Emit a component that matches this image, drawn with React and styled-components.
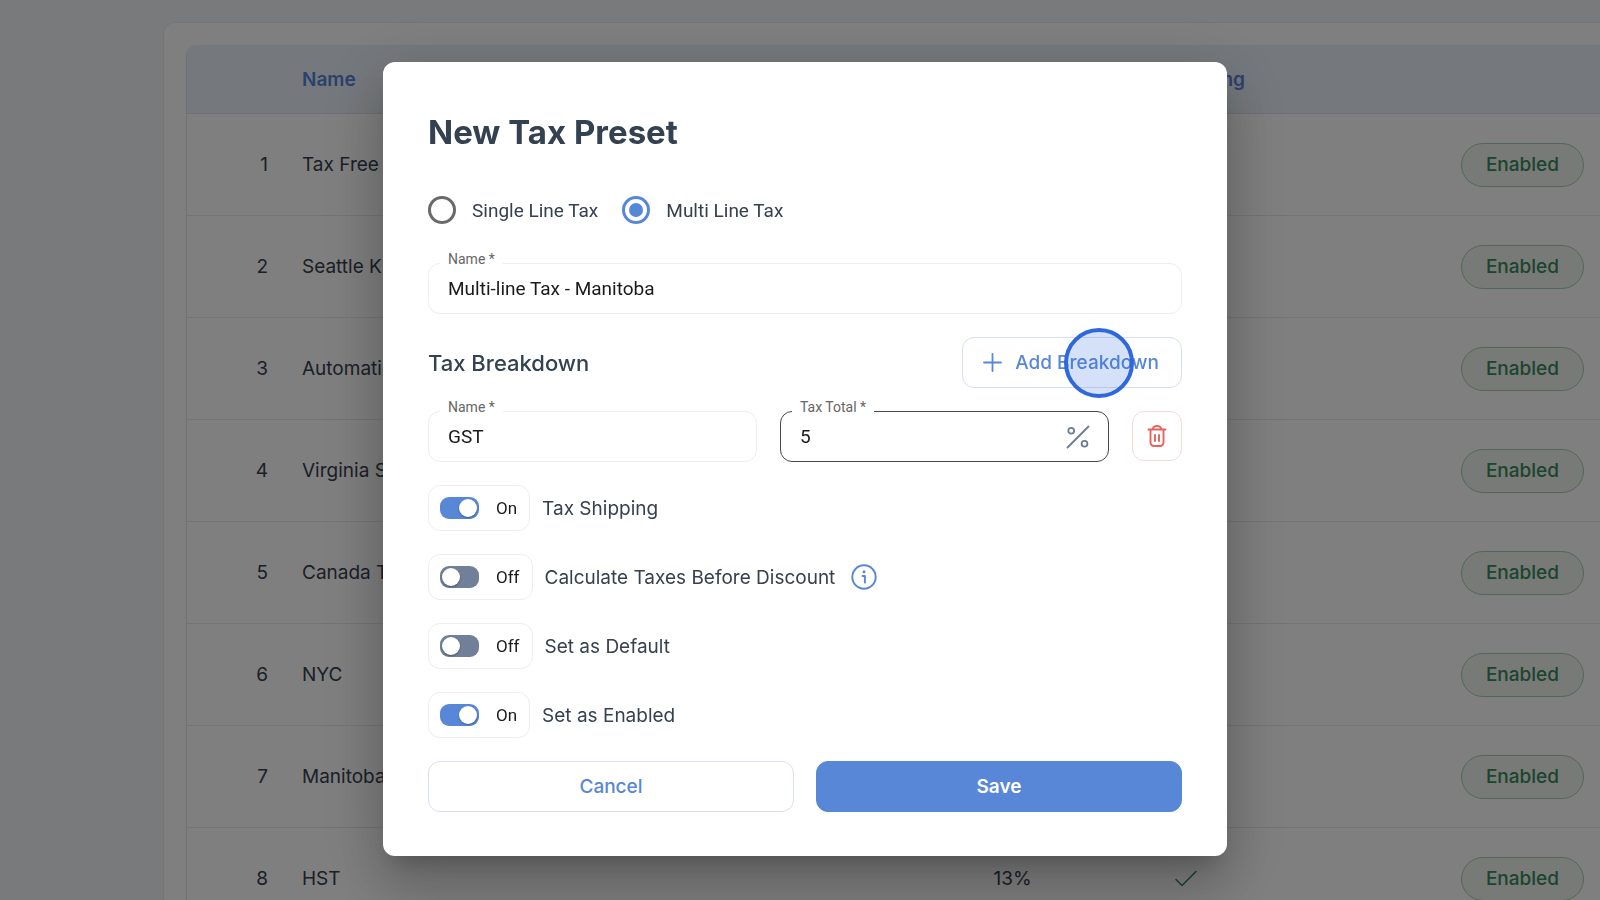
import React, { useState } from 'react';
import styled, { createGlobalStyle, ThemeProvider } from 'styled-components';

const theme = {
  primary: '#5887d8',
  ink: '#37404f',
  heading: '#344150',
  line: '#eceef3',
  inter: 'Inter, "Liberation Sans", sans-serif',
  roboto: 'Roboto, "Liberation Sans", sans-serif',
};

const GlobalStyle = createGlobalStyle`
  *, *::before, *::after { box-sizing: border-box; }
  body {
    margin: 0;
    background: #f3f5f8;
    font-family: ${theme.inter};
    font-size: 19px;
    color: ${theme.ink};
  }
`;

/* ---------- preset list behind the dialog ---------- */

const Page = styled.main`
  height: 100vh;
  overflow: hidden;
  padding: 22px 0 0 163px;
`;

const Card = styled.section`
  background: #fff;
  border: 1px solid #e9ebef;
  border-right: 0;
  border-radius: 12px 0 0 0;
  padding: 22px 0 22px 22px;
`;

const TableFrame = styled.div`
  border: 1px solid #e0e3e9;
  border-right: 0;
  border-top: 0;
  border-radius: 10px 0 0 0;
  overflow: hidden;
`;

const Table = styled.table`
  width: 100%;
  table-layout: fixed;
  border-collapse: separate;
  border-spacing: 0;
`;

const HeadCell = styled.th`
  height: 69px;
  padding: 0 16px;
  background: #ebf1f9;
  border-bottom: 1px solid #dbe0e9;
  color: #5583dc;
  font-weight: 600;
  text-align: ${(p) => p.$align || 'left'};
  width: ${(p) => p.$width || 'auto'};
  white-space: nowrap;
`;

const Cell = styled.td`
  height: 102px;
  padding: 0 16px;
  border-bottom: 1px solid #e7e9ed;
  text-align: ${(p) => p.$align || 'left'};
  white-space: nowrap;
  overflow: hidden;

  svg { display: block; margin: 0 auto; }
`;

const NumberCell = styled(Cell)`
  padding-right: 18px;
  text-align: right;
`;

const StatusPill = styled.span`
  display: inline-flex;
  align-items: center;
  justify-content: center;
  height: 44px;
  padding: 0 24px;
  border: 1px solid #a8cdb2;
  border-radius: 22px;
  background: #eef4ed;
  color: #39895e;
  font-weight: 500;
`;

/* ---------- dialog ---------- */

const Overlay = styled.div`
  position: fixed;
  inset: 0;
  display: flex;
  align-items: center;
  justify-content: center;
  padding: 18px 0 0 10px;
  background: rgba(0, 0, 0, 0.5);
`;

const Dialog = styled.form`
  display: flex;
  flex-direction: column;
  gap: 23px;
  width: 100%;
  max-width: 844px;
  padding: 45px 45px 44px;
  border-radius: 12px;
  background: #fff;
  box-shadow:
    0 15px 21px -10px rgba(0, 0, 0, 0.2),
    0 34px 54px 4px rgba(0, 0, 0, 0.14),
    0 13px 64px 11px rgba(0, 0, 0, 0.12);
`;

const Title = styled.h1`
  margin: 0;
  font-size: 33px;
  line-height: 50px;
  font-weight: 700;
  color: ${(p) => p.theme.heading};
`;

const RadioRow = styled.div`
  display: flex;
  align-items: center;
  gap: 24px;
  height: 60px;
`;

const RadioLabel = styled.label`
  display: flex;
  align-items: center;
  gap: 16px;
  font-family: ${(p) => p.theme.roboto};
`;

const Radio = styled.input`
  appearance: none;
  display: grid;
  place-items: center;
  width: 28px;
  height: 28px;
  margin: 0;
  border: 3px solid #6a6a6a;
  border-radius: 50%;

  &:checked { border-color: ${(p) => p.theme.primary}; }
  &:checked::before {
    content: '';
    width: 14px;
    height: 14px;
    border-radius: 50%;
    background: ${(p) => p.theme.primary};
  }
`;

const Row = styled.div`
  display: flex;
  align-items: ${(p) => p.$align || 'center'};
  justify-content: space-between;
  gap: 23px;
`;

const FieldBox = styled.div`
  position: relative;
  flex: 1;
  display: flex;
  align-items: center;
  min-width: 0;
  height: 51px;
  padding: 0 18px 0 19px;
  border: 1px solid ${(p) => (p.$active ? '#48484a' : p.theme.line)};
  border-radius: 12px;

  svg { flex: none; }
`;

const FieldLabel = styled.label`
  position: absolute;
  top: -13px;
  left: 11px;
  padding: 0 8px;
  background: #fff;
  color: #666;
  font-family: ${(p) => p.theme.roboto};
  font-size: 14px;
  line-height: 16px;
`;

const TextInput = styled.input`
  flex: 1;
  min-width: 0;
  padding: 0;
  border: 0;
  outline: 0;
  background: none;
  color: #1b1b1d;
  font-family: ${(p) => p.theme.roboto};
  font-size: 19px;
`;

const SectionTitle = styled.h2`
  margin: 0;
  font-size: 22px;
  font-weight: 500;
  color: ${(p) => p.theme.heading};
`;

const Button = styled.button`
  position: relative;
  display: flex;
  align-items: center;
  justify-content: center;
  gap: 13px;
  flex: ${(p) => (p.$grow ? 1 : 'none')};
  height: 51px;
  padding: 0 22px;
  border: 1px solid ${(p) => (p.$solid ? p.theme.primary : '#d7dff0')};
  border-radius: 12px;
  background: ${(p) => (p.$solid ? p.theme.primary : '#fff')};
  color: ${(p) => (p.$solid ? '#fff' : p.theme.primary)};
  font-family: ${(p) => p.theme.inter};
  font-size: 19px;
  font-weight: ${(p) => (p.$solid ? 600 : 500)};
`;

const AddButton = styled(Button)`
  padding-left: 20px;
`;

const DeleteButton = styled.button`
  display: grid;
  place-items: center;
  width: 50px;
  height: 50px;
  padding: 0;
  border: 1px solid #f8dadb;
  border-radius: 12px;
  background: #fff;
  color: #e9605c;
`;

const ClickMarker = styled.span`
  position: absolute;
  top: 50%;
  right: 47px;
  width: 70px;
  height: 70px;
  margin-top: -35px;
  border: 4px solid #2f67dc;
  border-radius: 50%;
  background: rgba(47, 103, 220, 0.2);
  pointer-events: none;
`;

const ToggleRow = styled.div`
  display: flex;
  align-items: center;
  gap: 12px;
`;

const ToggleBox = styled.div`
  display: flex;
  align-items: center;
  gap: 17px;
  height: 46px;
  padding: 0 12px 0 11px;
  border: 1px solid ${(p) => p.theme.line};
  border-radius: 12px;
`;

const ToggleState = styled.span`
  color: #1b1b1d;
  font-family: ${(p) => p.theme.roboto};
  font-size: 17px;
`;

const Switch = styled.input`
  appearance: none;
  display: flex;
  align-items: center;
  width: 39px;
  height: 22px;
  margin: 0;
  padding: 0 2px;
  border-radius: 9px;
  background: #717f98;

  &::before {
    content: '';
    width: 18px;
    height: 18px;
    border-radius: 50%;
    background: #fff;
    box-shadow: 0 1px 2px rgba(0, 0, 0, 0.35);
  }
  &:checked {
    justify-content: flex-end;
    background: ${(p) => p.theme.primary};
  }
`;

const Actions = styled.div`
  display: flex;
  gap: 22px;
`;

const Icon = ({ size, width = 1.6, children }) => (
  <svg width={size} height={size} viewBox={`0 0 ${size} ${size}`} fill="none" stroke="currentColor"
    strokeWidth={width} strokeLinecap="round" strokeLinejoin="round" aria-hidden="true">
    {children}
  </svg>
);

const PlusIcon = () => (
  <Icon size={19} width={1.8}><path d="M9.5 1v17M1 9.5h17" /></Icon>
);

const PercentIcon = () => (
  <Icon size={24} width={1.8}>
    <g stroke="#6b7c93">
      <path d="M1.5 22.5 22.5 1.5" />
      <circle cx="5.2" cy="5.8" r="2.9" />
      <circle cx="18.5" cy="18.8" r="2.9" />
    </g>
  </Icon>
);

const TrashIcon = () => (
  <Icon size={24} width={1.9}>
    <path d="M3.5 5.5h17M5.5 5.5v13a3.5 3.5 0 0 0 3.5 3.5h6a3.5 3.5 0 0 0 3.5-3.5v-13M7.5 5.3C8.2 3 9.6 1.9 12 1.900s3.8 1.100 4.500 3.400M10 11v6M14 11v6" />
  </Icon>
);

const InfoIcon = () => (
  <Icon size={26} width={1.9}>
    <circle cx="13" cy="13" r="11.7" />
    <path d="M11.6 12h2.3v6.5" />
    <circle cx="13" cy="7.7" r="1.5" fill="currentColor" stroke="none" />
  </Icon>
);

const CheckIcon = () => (
  <svg width="24" height="24" viewBox="0 0 24 24" fill="none" stroke="#39895e" strokeWidth="1.6" strokeLinecap="round" strokeLinejoin="round" role="img" aria-label="Yes">
    <path d="M2 12.5 8 18.5 22 4.5" />
  </svg>
);

const InfoSlot = styled.span`
  display: flex;
  padding-left: 4px;
  color: ${(p) => p.theme.primary};
`;

const presets = [
  { name: 'Tax Free' },
  { name: 'Seattle King' },
  { name: 'Automatic' },
  { name: 'Virginia Sales' },
  { name: 'Canada Tax' },
  { name: 'NYC' },
  { name: 'Manitoba' },
  { name: 'HST', rate: '13%', shipping: true },
];

function Field({ id, label, value, active, children }) {
  const [text, setText] = useState(value);
  return (
    <FieldBox $active={active}>
      <FieldLabel htmlFor={id}>{label} *</FieldLabel>
      <TextInput id={id} value={text} onChange={(e) => setText(e.target.value)} />
      {children}
    </FieldBox>
  );
}

function Toggle({ id, label, initial = false, children }) {
  const [on, setOn] = useState(initial);
  return (
    <ToggleRow>
      <ToggleBox>
        <Switch id={id} type="checkbox" role="switch" checked={on} onChange={(e) => setOn(e.target.checked)} />
        <ToggleState>{on ? 'On' : 'Off'}</ToggleState>
      </ToggleBox>
      <label htmlFor={id}>{label}</label>
      {children}
    </ToggleRow>
  );
}

export default function App() {
  const [kind, setKind] = useState('multi');
  return (
    <ThemeProvider theme={theme}>
      <GlobalStyle />
      <Page>
        <Card>
          <TableFrame>
            <Table>
              <thead>
                <tr>
                  <HeadCell $width="99px" />
                  <HeadCell>Name</HeadCell>
                  <HeadCell $width="173px" />
                  <HeadCell $width="173px" $align="center">Tax Shipping</HeadCell>
                  <HeadCell $width="328px" />
                </tr>
              </thead>
              <tbody>
                {presets.map((p, i) => (
                  <tr key={p.name}>
                    <NumberCell>{i + 1}</NumberCell>
                    <Cell>{p.name}</Cell>
                    <Cell $align="center">{p.rate}</Cell>
                    <Cell>{p.shipping && <CheckIcon />}</Cell>
                    <Cell $align="right"><StatusPill>Enabled</StatusPill></Cell>
                  </tr>
                ))}
              </tbody>
            </Table>
          </TableFrame>
        </Card>
      </Page>

      <Overlay>
        <Dialog role="dialog" aria-labelledby="dialog-title" onSubmit={(e) => e.preventDefault()}>
          <Title id="dialog-title">New Tax Preset</Title>
          <RadioRow>
            <RadioLabel>
              <Radio type="radio" name="kind" checked={kind === 'single'} onChange={() => setKind('single')} />
              Single Line Tax
            </RadioLabel>
            <RadioLabel>
              <Radio type="radio" name="kind" checked={kind === 'multi'} onChange={() => setKind('multi')} />
              Multi Line Tax
            </RadioLabel>
          </RadioRow>
          <Row>
            <Field id="preset-name" label="Name" value="Multi-line Tax - Manitoba" />
          </Row>
          <Row>
            <SectionTitle>Tax Breakdown</SectionTitle>
            <AddButton type="button">
              <PlusIcon />
              Add Breakdown
              <ClickMarker aria-hidden="true" />
            </AddButton>
          </Row>
          <Row $align="flex-start">
            <Field id="line-name" label="Name" value="GST" />
            <Field id="line-total" label="Tax Total" value="5" active>
              <PercentIcon />
            </Field>
            <DeleteButton type="button" aria-label="Delete breakdown"><TrashIcon /></DeleteButton>
          </Row>
          <Toggle id="tax-shipping" label="Tax Shipping" initial />
          <Toggle id="before-discount" label="Calculate Taxes Before Discount">
            <InfoSlot><InfoIcon /></InfoSlot>
          </Toggle>
          <Toggle id="set-default" label="Set as Default" />
          <Toggle id="set-enabled" label="Set as Enabled" initial />
          <Actions>
            <Button type="button" $grow>Cancel</Button>
            <Button type="submit" $grow $solid>Save</Button>
          </Actions>
        </Dialog>
      </Overlay>
    </ThemeProvider>
  );
}
